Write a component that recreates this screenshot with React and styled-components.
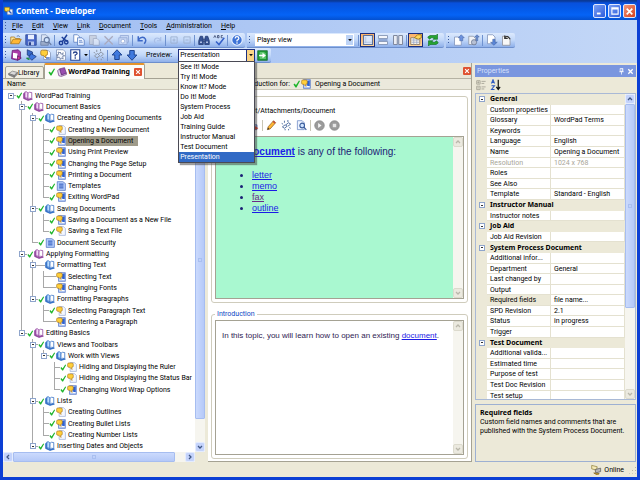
import React from "react";
import styled, { createGlobalStyle, css } from "styled-components";

const GlobalStyle = createGlobalStyle`
  *, *::before, *::after { box-sizing: border-box; }
  body { margin: 0; }
  body, button, select, input, table {
    font-family: Roboto, "Noto Sans", sans-serif;
    font-size: 7px;
    line-height: 10px;
    color: #000;
  }
  button { padding: 0; border: 0; background: none; }
  ul { list-style: none; margin: 0; padding: 0; }
`;

const boldFace = css`
  font-family: "Noto Sans", "Open Sans", sans-serif;
  font-weight: bold;
`;

/* ---------- icons ---------- */

const page = (x = 3, y = 1, w = 10, h = 13, fill = "#fff", stroke = "#7c8fb5") => (
  <path d={`M${x} ${y}h${w - 3}l3 3v${h - 3}h-${w}z`} fill={fill} stroke={stroke} />
);
const magnifier = (c = "#3b5d9c") => (
  <g fill="#cfe4ff" stroke={c} strokeWidth="1.6"><circle cx="9" cy="8" r="3.4" /><path d="M11.5 10.5l3.5 4" /></g>
);
const balloon = <path d="M1 3.500q0-2 2-2h5q2 0 2 2v3q0 2-2 2H7.500l.5 3.500L4.500 8.500H3q-2 0-2-2z" fill="#ffcf3a" stroke="#a9741a" />;
const book = (line, fill) => (
  <g stroke={line} strokeWidth="1.200" strokeLinejoin="round">
    <path d="M1 4l2-1v8l5 3 5-2 2 1-7 2-7-3z" fill={line} />
    <path d="M3 1.500Q6.500 0 8 3.500v10Q6.500 10 3 11z" fill={fill} />
    <path d="M14 2.500Q9.500 1 8 3.500v10q1.500-3 6-1.500z" fill="#fff" />
  </g>
);

const GLYPHS = {
  app: <><path d="M5 5h9v9H5z" fill="#e8edf8" stroke="#51699e" /><path d="M1 2h8v6H5L3 10V8H1z" fill="#ffd83d" stroke="#8a6a10" /><path d="M8 8l4 4" stroke="#2a57c0" strokeWidth="2" /></>,
  open: <><path d="M1 13V4h5l1 2h6v3" fill="#ffe9a0" stroke="#a9741a" /><path d="M1 13l3-6h11l-3 6z" fill="#ffb734" stroke="#a9741a" /><path d="M9 3q3-2 4 1" fill="none" stroke="#4f6ba5" /></>,
  save: <><path d="M1 1h14v14H2l-1-1z" fill="#4867c8" stroke="#27408f" /><path d="M4 1h8v6H4z" fill="#e8efff" /><path d="M4 10h8v5H4z" fill="#b9c8ee" /><path d="M5 11h3v4H5z" fill="#27408f" /></>,
  printFind: <>{page(2, 1, 9, 12, "#dde6f5", "#8194b8")}<path d="M1 10h10v5H1z" fill="#9aabc9" stroke="#65799f" />{magnifier("#65799f")}</>,
  cut: <g fill="none" stroke="#1d3f99" strokeWidth="1.900"><path d="M12 1L6 10M5 4l7 6" /><circle cx="4" cy="12" r="2.300" /><circle cx="11" cy="11" r="2.300" /></g>,
  copy: <>{page(1, 1, 8, 10, "#fff", "#5278bd")}{page(6, 5, 9, 10, "#eaf2ff", "#5278bd")}<path d="M8 9h4M8 11h5" stroke="#5278bd" /></>,
  paste: <g opacity=".7"><path d="M2 2h9v12H2z" fill="#c9cdd8" stroke="#8f96ab" />{page(7, 6, 8, 9, "#e6ebf5", "#8f96ab")}</g>,
  del: <path d="M2 3l11 11M13 3L2 14" stroke="#a9a9bd" strokeWidth="1.700" fill="none" />,
  camera: <g stroke="#8fa6d4" fill="#c5d5f3"><path d="M3 2h11v9H3z" /><path d="M1 5h11v9H1z" /><circle cx="6.500" cy="9.500" r="2.500" fill="#fff" /></g>,
  undo: <path d="M3 3v6h6M3 8q4-5 8-3 4 3 0 8" fill="none" stroke="#3d68c6" strokeWidth="2" />,
  redo: <path d="M13 4v5H8M13 8Q9 4 6 6q-3 3 0 6" fill="none" stroke="#a9bee6" strokeWidth="1.500" />,
  plus: <path d="M3 3h10v10H3zM8 5.500v5M5.500 8h5" fill="none" stroke="#9db0cf" strokeWidth="1.400" />,
  minus: <path d="M3 3h10v10H3zM5.500 8h5" fill="none" stroke="#9db0cf" strokeWidth="1.400" />,
  binoculars: <g fill="#375394" stroke="#22386e"><path d="M3 3h3l1 4v7H1V9zM10 3h3l2 6v5H9V7z" /><path d="M7 7h2v3H7z" fill="#8ea6d8" /><path d="M3 10h2v2H3zM11 10h2v2h-2z" fill="#dbe6ff" stroke="none" /></g>,
  spell: <><path d="M1 5l1.500-3L4 5M6 2v3h2V2zM13 2h-2v3h2" stroke="#2b3b64" fill="none" /><path d="M4 10l4 4 7-9" stroke="#3560c8" strokeWidth="2" fill="none" /></>,
  help: <><circle cx="8" cy="8" r="7" fill="#3c72d6" stroke="#e8f1ff" strokeWidth="1.500" /><path d="M5.500 6q0-2.500 2.500-2.500T10.500 6Q10.500 7 8 8.500V10M8 11v2" stroke="#fff" strokeWidth="1.600" fill="none" /></>,
  frame: <><path d="M2 2h12v12H2z" fill="#dce8fb" stroke="#5f7399" strokeWidth="1.500" /><path d="M5 4v8M3 11h10" stroke="#a9bbdc" /></>,
  rows: <><path d="M2 2h12v4H2zM2 10h12v4H2z" fill="#f5f7fc" stroke="#7587a8" /><path d="M2 7.500h12v1H2z" fill="#3f5d99" /></>,
  cols: <path d="M2 2h5v12H2zM9 2h5v12H9z" fill="#e9ecf3" stroke="#7d869b" strokeWidth="1.300" />,
  props: <><path d="M1 5h12v9H1z" fill="#f7f4e6" stroke="#7a6a55" /><path d="M2 8h10M2 11h10M5 5v9M9 5v9" stroke="#96a6cd" /><path d="M6 5l4-4h5v4l-4 2z" fill="#ffd75a" stroke="#8a6a10" /></>,
  refresh: (
    <g fill="#26a531" stroke="#0c6f1c" strokeWidth=".8">
      <path d="M1 4l3-2h8l2-2v7H8l2-2H6L3 7z" />
      <path d="M15 12l-3 2H4l-2 2V9h6l-2 2h4l3-2z" />
    </g>
  ),
  pageUp: <>{page(2, 4, 9, 11)}<path d="M11 1l4 4h-2v4h-4V5H7z" fill="#6d92de" stroke="#3f5fa0" strokeWidth=".7" /></>,
  pageUpGray: <>{page(1, 3, 9, 11, "#f1f2f5", "#8790a2")}<circle cx="8" cy="11" r="3.500" fill="#b7c0d4" stroke="#68748f" /><path d="M12 1l3 3h-2v5h-2V4H9z" fill="#6b8dce" stroke="#3f5fa0" strokeWidth=".7" /></>,
  pageDown: <>{page(2, 1, 10, 12)}<path d="M9 7h3v4h3l-4.500 4L6 11h3z" fill="#5a86d8" stroke="#3f5fa0" strokeWidth=".7" /></>,
  pageUndo: <>{page(2, 3, 10, 12, "#f8f8f8", "#8c8c94")}<path d="M12 7Q9 1 5 5M5 2v4h4" fill="none" stroke="#333" strokeWidth="1.600" /></>,
  purpleBook: <><path d="M3 2l8-1 3 3v9l-4 2-8-2z" fill="#a93aa8" stroke="#601d6f" /><path d="M4 5l6 1v7l-6-1z" fill="#fff" /><path d="M10 9l5 3-5 3z" fill="#d63c8f" stroke="#601d6f" /></>,
  training: <><path d="M4 3l8-2 3 9-8 3z" fill="#9a4fb0" stroke="#5b2370" /><path d="M1 6l3-3 3 10 8-3v2l-8 3-4-1z" fill="#e9d5f0" stroke="#5b2370" /></>,
  blueDown: <><path d="M3 1l7 3v8l-7-4z" fill="#3968c9" stroke="#1c3777" /><path d="M8 6l7 4-6 5-4-4z" fill="#3f77e0" stroke="#1c3777" /><path d="M2 12l4 2" stroke="#1a8b3a" strokeWidth="2" /></>,
  topicNew: <>{page(5, 2, 9, 12)}{balloon}<path d="M8 12h5" stroke="#4b72c0" strokeWidth="2" /></>,
  newPage: <>{page(2, 1, 12, 14)}<path d="M7 4l1 3 3-2-1 3 3 1-3 1 1 3-3-1-1 2-1-3-3 1 1-3-2-1 3-1-1-3 3 1z" fill="#f4f7ff" stroke="#66779c" /></>,
  question: <><path d="M1 1h12v14H1z" fill="#fff" stroke="#294999" strokeWidth="1.500" /><path d="M4.500 6q0-2 2.500-2t2.500 2q0 1-2.500 2v2M7 11v2" fill="none" stroke="#1f3a86" strokeWidth="1.700" /></>,
  linkGray: <g fill="none" stroke="#8b93a2" strokeWidth="1.300"><path d="M2 9l4-3 3 3-4 3zM7 7l4-3 3 3-4 3M5 1v3M10 0v3M1 4l2 2M14 12l-2-1M6 15v-2M11 15v-2" /></g>,
  up: <path d="M8 1l6.500 7H11v6H5V8H1.500z" fill="#3f79de" stroke="#1e438f" strokeWidth="1.300" />,
  down: <path d="M8 15l6.500-7H11V2H5v6H1.500z" fill="#3f79de" stroke="#1e438f" strokeWidth="1.300" />,
  go: <><path d="M1 1h14v14H1z" fill="#219a37" stroke="#0d6422" /><path d="M4 3h6l3 2v8H4z" fill="#5cc56c" /><path d="M3 7h5V4l5 4-5 4V9H3z" fill="#fff" /></>,
  library: <g stroke="#6b6b6b"><path d="M1 9l6-4 8 2-5 5z" fill="#d9d9d9" /><path d="M1 9l9 3v3L1 11zM10 12l5-5v3l-5 5z" fill="#8f8f8f" /></g>,
  check: <path d="M1 9l2-2 3 3 6-9 2 1-7 13H5z" fill="#1fb52c" />,
  chapter: book("#8d3f9b", "#f3d8f7"),
  section: book("#2d6bc4", "#b9dcff"),
  topic: <>{page(5, 1, 10, 14, "#f3f7ff", "#8ea3cd")}{balloon}</>,
  topicDone: <><path d="M4 1h11v14H4z" fill="#b8cdf7" stroke="#4569bd" /><path d="M8 4l6-2v11l-4-3z" fill="#2f61d0" /><path d="M6 12h8" stroke="#fff" strokeWidth="1.500" />{balloon}</>,
  doc: <><path d="M2 1h9l4 3v11H2z" fill="#b5cdfb" stroke="#3b62b8" /><path d="M5 5h7M5 8h7M5 11h7" stroke="#2450b8" strokeWidth="1.600" /></>,
  print: <><path d="M2 7h11v7H2z" fill="#b9c8ee" stroke="#27408f" /><path d="M9 8l6 4-6 3z" fill="#d9351f" /></>,
  pencil: <><path d="M2 14l1-4L11 1l3 3-8 9z" fill="#ffb734" stroke="#8a5a16" /><path d="M11 1l3 3-1.500 1.500-3-3z" fill="#c14a3a" /><path d="M2 14l1-3 2 2z" fill="#333" /></>,
  linkBlue: <g fill="none" stroke="#47679c" strokeWidth="1.300"><path d="M2 10l4-3 3 2-4 3zM7 7l4-3 3 2-4 3M5 1v3M10 0v3M1 5l2 1M14 12l-2-1M6 15v-2M11 15v-2" /></g>,
  find: <>{page(2, 1, 10, 13, "#eef4ff", "#5d7fbf")}{magnifier()}</>,
  play: <><circle cx="8" cy="8" r="7" fill="#9b9b9b" stroke="#868686" /><path d="M6 4.500l5 3.500-5 3.500z" fill="#f4f4f4" /></>,
  stop: <><circle cx="8" cy="8" r="7" fill="#9b9b9b" stroke="#868686" /><path d="M5.500 5.500h5v5h-5z" fill="#e6e6e6" /></>,
  categories: <g fill="none" stroke="#a7a598" strokeWidth="1.300"><path d="M1 1h5v5H1zM1 9h5v5H1zM2 3.500h3M2 11.500h3M3.500 2v3M8 2h6M8 5h4M8 10h6M8 13h4" /></g>,
  sort: <><path d="M2 6l2-5 2 5M3 4.500h2M2 9h4l-4 5h4" stroke="#2b57c0" strokeWidth="1.400" fill="none" /><path d="M11 1v12M8.500 10.500L11 14l2.500-3.500" stroke="#111" strokeWidth="1.600" fill="none" /></>,
  pin: <path d="M5 1h6v7H5zM9.500 1v7M3 8.500h10M8 9v6" stroke="#fff" strokeWidth="1.700" fill="none" />,
  close: <path d="M3 3l10 10M13 3L3 13" stroke="#fff" strokeWidth="3" fill="none" />,
  minimize: <path d="M3 12h6" stroke="#fff" strokeWidth="3" />,
  maximize: <path d="M3 3h10v10H3zM3 4.500h10" stroke="#fff" strokeWidth="1.800" fill="none" />,
  online: <><path d="M1 2l8 2-1 5-7-2z" fill="#f4e9b8" stroke="#8a7a30" /><path d="M6 8l8-2v5l-7 2z" fill="#b8b8b8" stroke="#555" /><path d="M4 13l8 1-3 2z" fill="#e6b729" stroke="#7a5a10" /></>,
  chevUp: <path d="M4 10l4-4 4 4" stroke="currentColor" strokeWidth="2.500" fill="none" />,
  chevDown: <path d="M4 6l4 4 4-4" stroke="currentColor" strokeWidth="2.500" fill="none" />,
  chevLeft: <path d="M10 4L6 8l4 4" stroke="currentColor" strokeWidth="2.500" fill="none" />,
  chevRight: <path d="M6 4l4 4-4 4" stroke="currentColor" strokeWidth="2.500" fill="none" />,
  caret: <path d="M3 5h10l-5 6z" fill="currentColor" />,
};

const Svg = styled.svg`
  display: block;
  flex: none;
  width: ${(p) => p.$size}px;
  height: ${(p) => p.$size}px;
`;
const Icon = ({ name, size = 11 }) => (
  <Svg $size={size} viewBox="0 0 16 16" aria-hidden="true">{GLYPHS[name]}</Svg>
);

/* ---------- window frame ---------- */

const Window = styled.div`
  height: 100vh;
  display: flex;
  flex-direction: column;
  background: #ece9d8;
  border: solid #0c3fd4;
  border-width: 0 3px 3px;
  overflow: hidden;
`;
const TitleBar = styled.header`
  display: flex;
  align-items: center;
  flex: none;
  height: 20px;
  margin: 0 -3px;
  padding: 2px 4px 0 4px;
  gap: 2px;
  background: linear-gradient(#0a3a98 0 1px, #0850dc 3px, #0458e6 8px, #0563f6 15px, #0450cf 20px);
`;
const Title = styled.h1`
  flex: 1;
  margin: 0;
  ${boldFace}
  font-size: 8px;
  color: #fff;
`;
const CaptionButton = styled.button`
  display: grid;
  place-items: center;
  width: 13px;
  height: 14px;
  border: 1px solid #dfe8ff;
  border-radius: 2px;
  background: ${(p) => (p.$danger ? "linear-gradient(135deg,#f0987c,#d9401c)" : "linear-gradient(135deg,#7ba0f4,#2b5bdc)")};
`;
const Bars = styled.div`
  position: relative;
  z-index: 5;
  flex: none;
  background: linear-gradient(90deg, #9fbdf2, #c3d7f7);
`;
const MenuBar = styled.nav`
  display: flex;
  align-items: center;
  height: 12px;
`;
const MenuItems = styled.div`
  display: flex;
  gap: 9px;
  padding-left: 4px;
`;
const MenuItem = styled.button`
  line-height: 10px;
  &::first-letter { text-decoration: underline; }
`;
const BarRow = styled.div`
  display: flex;
  height: 15px;
  gap: 2px;
  margin-top: ${(p) => p.$gap || 0}px;
`;
const Toolbar = styled.div`
  display: flex;
  align-items: center;
  padding-right: 1px;
  border-radius: 0 2px 2px 0;
  border-bottom: 1px solid #6d8fcc;
  background: linear-gradient(#dce9fd, #c2d8f9 50%, #8fb0ea);
`;
const Grip = styled.span`
  flex: none;
  width: ${(p) => p.$w || 5}px;
  height: 9px;
  background: repeating-linear-gradient(#3b5b9f 0 1px, transparent 1px 3px) 2px 0 / 1px 100% no-repeat;
`;
const Separator = styled.span`
  flex: none;
  width: 1px;
  height: 11px;
  margin: 0 1px;
  background: ${(p) => (p.$soft ? "#c8c5b5" : "#6f92d0")};
`;
const ToolButton = styled.button`
  display: flex;
  align-items: center;
  justify-content: center;
  flex: none;
  width: ${(p) => p.$w || 15}px;
  height: 14px;
  ${(p) => p.$on && css`border: 1px solid #1b2f80; background: linear-gradient(#fbb066, #ffd69a);`}
`;
const Combo = styled.div`
  position: relative;
  display: flex;
  flex: none;
  width: ${(p) => p.$w}px;
  height: ${(p) => p.$h}px;
  margin-right: ${(p) => p.$after || 0}px;
  background: #fff;
  border: 1px solid ${(p) => (p.$open ? "#1b2f80" : "#fff")};
`;
const ComboSelect = styled.select`
  flex: 1;
  min-width: 0;
  appearance: none;
  border: 0;
  padding: 0 1px;
  background: #fff;
  border-radius: 0;
`;
const ComboArrow = styled.span`
  display: grid;
  place-items: center;
  width: 8px;
  pointer-events: none;
  color: #111;
  background: ${(p) => (p.$open ? "#fbd486" : "#bdd3f6")};
  border-left: 1px solid ${(p) => (p.$open ? "#1b2f80" : "#fff")};
`;
const Menu = styled.ul`
  position: absolute;
  top: 100%;
  left: -1px;
  width: 77px;
  background: #fff;
  border: 1px solid #4a4a55;
  box-shadow: 2px 2px 1px rgba(60, 60, 60, 0.5);
`;
const MenuOption = styled.li`
  padding-left: 1px;
  line-height: 10px;
  ${(p) => p.$active && css`background: #316ac5; color: #fff;`}
`;
const BarLabel = styled.label`padding: 0 6px 0 7px;`;

/* ---------- scrollbars ---------- */

const Track = styled.div`
  display: flex;
  flex: none;
  flex-direction: ${(p) => (p.$row ? "row" : "column")};
  ${(p) => (p.$row ? "height: 10px;" : "width: 10px;")}
  background: #f6f5ef;
`;
const ScrollButton = styled.button`
  display: grid;
  place-items: center;
  width: 10px;
  height: 10px;
  color: ${(p) => (p.$off ? "#b9b7aa" : "#3f5684")};
  background: ${(p) => (p.$off ? "#ebe9df" : "#c4d3fb")};
  border: 1px solid ${(p) => (p.$off ? "#dcdacd" : "#e4ecff")};
  border-radius: 2px;
`;
const Thumb = styled.div`
  flex: ${(p) => p.$grow} 1 0;
  display: grid;
  place-items: center;
  background: linear-gradient(${(p) => (p.$row ? "180deg" : "90deg")}, #cbdafd, #b5c9f8);
  border: 1px solid #a6bdf0;
  border-radius: 1px;
  &::after { content: ""; width: 4px; height: 4px; border: 1px solid #a9bff0; }
`;
const Rest = styled.div`flex: ${(p) => p.$grow} 1 0;`;
const Corner = styled.div`
  flex: none;
  width: 10px;
  background: #ece9d8;
`;
const ScrollRow = styled.div`
  display: flex;
  flex: none;
  & > :first-child { flex: 1; }
`;

const Scrollbar = ({ row, thumb, rest = 0, off, endOff }) => (
  <Track $row={row}>
    <ScrollButton $off={off} aria-label="Scroll back"><Icon name={row ? "chevLeft" : "chevUp"} size={8} /></ScrollButton>
    {thumb ? <Thumb $row={row} $grow={thumb} /> : null}
    <Rest $grow={thumb ? rest : 1} />
    <ScrollButton $off={off || endOff} aria-label="Scroll forward"><Icon name={row ? "chevRight" : "chevDown"} size={8} /></ScrollButton>
  </Track>
);

/* ---------- workspace ---------- */

const Workspace = styled.main`
  flex: 1;
  min-height: 0;
  display: grid;
  grid-template-columns: 202px minmax(0, 1fr) 162px;
  grid-template-rows: minmax(0, 1fr);
  gap: 3px;
`;
const Pane = styled.section`
  display: flex;
  flex-direction: column;
  min-width: 0;
  min-height: 0;
`;
const Tabs = styled.div`
  display: flex;
  align-items: flex-end;
  flex: none;
  height: 16px;
  padding-left: 2px;
  border-bottom: 1px solid #a5a293;
`;
const Tab = styled.button`
  display: flex;
  align-items: center;
  height: ${(p) => (p.$active ? 16 : 13)}px;
  padding: 0 4px 0 2px;
  margin-bottom: -1px;
  background: ${(p) => (p.$active ? "#fcfcf9" : "#f1efe4")};
  border: 1px solid #a5a293;
  border-bottom: ${(p) => (p.$active ? 0 : "1px solid #a5a293")};
  border-radius: 2px 2px 0 0;
  ${(p) => p.$active && css`${boldFace} border-top: 2px solid #e5942c; padding: 0 2px 0 3px; gap: 1px;`}
`;
const TabClose = styled.span`
  display: grid;
  place-items: center;
  width: 8px;
  height: 8px;
  margin-left: 3px;
  border-radius: 1px;
  background: #df5230;
`;
const TreeHeader = styled.div`
  flex: none;
  height: 11px;
  padding-left: 4px;
  background: #ebeadb;
  border-bottom: 1px solid #cbc7b8;
`;
const TreeBody = styled.div`
  flex: 1;
  min-height: 0;
  display: flex;
  background: #fff;
`;
const Tree = styled.ul`
  flex: 1;
  min-width: 0;
  display: flex;
  flex-direction: column;
  padding-left: 2px;
`;
const TreeRow = styled.li`
  flex: 1 1 0;
  min-height: 0;
  display: flex;
  align-items: center;
  white-space: nowrap;
`;
const line = "linear-gradient(#a8a8a8, #a8a8a8)";
const guideStyles = {
  blank: "",
  pass: `background: ${line} 5px 0 / 1px 100% no-repeat;`,
  tee: `background: ${line} 5px 0 / 1px 100% no-repeat, ${line} 5px 50% / 6px 1px no-repeat;`,
  end: `background: ${line} 5px 0 / 1px 50% no-repeat, ${line} 5px 50% / 6px 1px no-repeat;`,
  root: `background: ${line} 5px 50% / 6px 1px no-repeat;`,
};
const Guide = styled.span`
  flex: none;
  align-self: stretch;
  display: grid;
  place-items: center;
  width: 11px;
  ${(p) => guideStyles[p.$kind]}
`;
const Expander = styled.button`
  display: block;
  width: 6px;
  height: 6px;
  border: 1px solid #8fa5cc;
  background: linear-gradient(#333, #333) center / 2px 1px no-repeat #fff;
`;
const Dash = styled.span`
  width: 7px;
  height: 1px;
  background: #a8a8a8;
`;
const NodeLabel = styled.span`
  padding: 0 5px 0 2px;
  ${(p) => p.$selected && css`background: #9f9b8a;`}
`;

const t = (label, icon, extra) => ({ label, icon, ...extra });
const TREE = t("WordPad Training", "chapter", {
  kids: [
    t("Document Basics", "chapter", {
      kids: [
        t("Creating and Opening Documents", "section", {
          kids: [
            t("Creating a New Document", "topic"),
            t("Opening a Document", "topicDone", { selected: true }),
            t("Using Print Preview", "topicDone"),
            t("Changing the Page Setup", "topicDone"),
            t("Printing a Document", "topicDone"),
            t("Templates", "doc"),
            t("Exiting WordPad", "topicDone"),
          ],
        }),
        t("Saving Documents", "section", {
          kids: [t("Saving a Document as a New File", "topicDone"), t("Saving a Text File", "topic")],
        }),
        t("Document Security", "doc"),
      ],
    }),
    t("Applying Formatting", "chapter", {
      kids: [
        t("Formatting Text", "section", {
          open: true,
          kids: [t("Selecting Text", "topicDone", { open: true }), t("Changing Fonts", "topicDone", { open: true })],
        }),
        t("Formatting Paragraphs", "section", {
          kids: [t("Selecting Paragraph Text", "topic"), t("Centering a Paragraph", "topicDone", { open: true })],
        }),
      ],
    }),
    t("Editing Basics", "chapter", {
      kids: [
        t("Views and Toolbars", "section", {
          kids: [
            t("Work with Views", "section", {
              kids: [
                t("Hiding and Displaying the Ruler", "topic"),
                t("Hiding and Displaying the Status Bar", "topic"),
                t("Changing Word Wrap Options", "topicDone"),
              ],
            }),
          ],
        }),
        t("Lists", "section", {
          kids: [t("Creating Outlines", "topic"), t("Creating Bullet Lists", "topicDone"), t("Creating Number Lists", "topic")],
        }),
        t("Inserting Dates and Objects", "section", { kids: [] }),
      ],
    }),
  ],
});

const flatten = (node, guides, kind) => [
  { ...node, guides: [...guides, kind] },
  ...(node.kids || []).flatMap((kid, i, all) =>
    flatten(kid, [...guides, kind === "tee" ? "pass" : "blank"], i === all.length - 1 ? "end" : "tee")
  ),
];
const ROWS = flatten(TREE, [], "root");

const TreePane = () => (
  <Pane>
    <Tabs>
      <Tab><Icon name="library" size={10} />Library</Tab>
      <Tab $active>
        <Icon name="check" size={8} /><Icon name="training" size={10} />WordPad Training
        <TabClose><Icon name="close" size={6} /></TabClose>
      </Tab>
    </Tabs>
    <TreeHeader>Name</TreeHeader>
    <TreeBody>
      <Tree>
        {ROWS.map((row) => (
          <TreeRow key={row.label}>
            {row.guides.map((kind, i) => (
              <Guide key={i} $kind={kind}>
                {i === row.guides.length - 1 && row.kids && <Expander aria-label={`Collapse ${row.label}`} />}
              </Guide>
            ))}
            {row.open ? <Dash /> : <Icon name="check" size={7} />}
            <Icon name={row.icon} size={10} />
            <NodeLabel $selected={row.selected}>{row.label}</NodeLabel>
          </TreeRow>
        ))}
      </Tree>
      <Scrollbar thumb={318} rest={23} />
    </TreeBody>
    <ScrollRow>
      <Scrollbar row thumb={160} rest={10} />
      <Corner />
    </ScrollRow>
  </Pane>
);

/* ---------- editor ---------- */

const EditorPane = styled(Pane)`
  background: #fff;
  border-right: 1px solid #a5a293;
  border-bottom: 1px solid #a5a293;
`;
const EditorTop = styled.div`
  display: flex;
  justify-content: flex-end;
  align-items: center;
  flex: none;
  height: 15px;
  background: #e9e6d6;
`;
const CloseButton = styled.button`
  display: grid;
  place-items: center;
  width: 8px;
  height: 8px;
  border-radius: 1px;
  background: #df5230;
`;
const EditorCaption = styled.div`
  display: flex;
  align-items: center;
  flex: none;
  height: 12px;
  padding-left: 32px;
  background: #ebe9dc;
  border-top: 1px solid #b5b2a3;
  border-bottom: 1px solid #cbc8b8;
`;
const CaptionTopic = styled.span`
  display: flex;
  align-items: center;
  padding-left: 3px;
  & > span { padding-left: 4px; }
`;
const Groups = styled.div`
  flex: 1;
  min-height: 0;
  display: flex;
  flex-direction: column;
  gap: 7px;
  padding: 6px 3px 2px;
`;
const Group = styled.fieldset`
  flex: ${(p) => p.$grow} 1 0;
  min-width: 0;
  min-height: 0;
  margin: 0;
  padding: ${(p) => (p.$titled ? 2 : 9)}px 3px 3px;
  border: 1px solid #cfccbc;
  border-radius: 3px;
`;
const GroupBody = styled.div`
  height: 100%;
  display: flex;
  flex-direction: column;
`;
const Legend = styled.legend`
  margin: 0;
  padding: 0 2px;
  line-height: 8px;
  color: #0b46c4;
`;
const Path = styled.div`padding-left: 15px;`;
const EditTools = styled.div`
  display: flex;
  align-items: center;
  flex: none;
  height: 19px;
  margin-bottom: 1px;
  padding-left: 31px;
`;
const Viewer = styled.div`
  flex: 1;
  min-height: 0;
  display: flex;
  background: ${(p) => p.$bg};
  border: 1px solid #a5a293;
`;
const Prose = styled.div`
  flex: 1;
  font-family: "Liberation Sans", Arial, sans-serif;
  font-size: ${(p) => p.$size}px;
  line-height: 11px;
  padding: 9px 6px;
  color: ${(p) => p.$ink};
`;
const Paragraph = styled.p`
  margin: 0 0 13px;
  text-indent: ${(p) => p.$indent || 0}px;
  white-space: nowrap;
`;
const Bullets = styled.ul`
  list-style: disc;
  padding-left: 30px;
  font-size: 9px;
`;
const Link = styled.a`
  color: ${(p) => (p.$visited ? "#6a2a86" : "#1b1be6")};
  text-decoration: underline;
`;

const Editor = () => (
  <EditorPane>
    <EditorTop><CloseButton aria-label="Close"><Icon name="close" size={6} /></CloseButton></EditorTop>
    <EditorCaption>
      Introduction for:
      <CaptionTopic><Icon name="check" size={8} /><Icon name="topicDone" size={10} /><span>Opening a Document</span></CaptionTopic>
    </EditorCaption>
    <Groups>
      <Group $grow={205}>
        <GroupBody>
          <Path>/Content/Attachments/Document</Path>
          <EditTools>
            <ToolButton aria-label="Print"><Icon name="print" /></ToolButton>
            <Separator $soft />
            <ToolButton aria-label="Edit"><Icon name="pencil" /></ToolButton>
            <ToolButton aria-label="Link"><Icon name="linkBlue" /></ToolButton>
            <ToolButton aria-label="Preview"><Icon name="find" /></ToolButton>
            <Separator $soft />
            <ToolButton aria-label="Play"><Icon name="play" /></ToolButton>
            <ToolButton aria-label="Stop"><Icon name="stop" /></ToolButton>
          </EditTools>
          <Viewer $bg="#a9f8d0">
            <Prose $size={10} $ink="#1b2176">
              <Paragraph $indent={24}><b><Link href="#document">Document</Link></b> is any of the following:</Paragraph>
              <Bullets>
                <li><Link href="#letter">letter</Link></li>
                <li><Link href="#memo">memo</Link></li>
                <li><Link href="#fax" $visited>fax</Link></li>
                <li><Link href="#outline">outline</Link></li>
              </Bullets>
            </Prose>
            <Scrollbar off />
          </Viewer>
        </GroupBody>
      </Group>
      <Group $grow={150} $titled>
        <Legend>Introduction</Legend>
        <GroupBody>
          <Viewer $bg="#fff">
            <Prose $size={8} $ink="#2f1c52">
              <Paragraph>In this topic, you will learn how to open an existing <Link href="#doc">document</Link>.</Paragraph>
            </Prose>
            <Scrollbar off />
          </Viewer>
        </GroupBody>
      </Group>
    </Groups>
  </EditorPane>
);

/* ---------- properties ---------- */

const PropsPane = styled(Pane)`
  padding-top: 2px;
  padding-right: 1px;
`;
const PropsTitle = styled.div`
  display: flex;
  align-items: center;
  flex: none;
  height: 12px;
  padding: 0 2px;
  gap: 2px;
  color: #d7e1fb;
  background: #7a96df;
  & > span { flex: 1; }
`;
const PropsTools = styled.div`
  display: flex;
  align-items: center;
  flex: none;
  height: 16px;
`;
const PropsBox = styled.div`
  flex: 1;
  min-height: 0;
  display: flex;
  overflow: hidden;
  border: 1px solid #a9b9d6;
`;
const PropsTable = styled.table`
  flex: 1;
  min-width: 0;
  display: flex;
  margin-bottom: -2px;
  & > tbody { flex: 1; min-width: 0; display: flex; flex-direction: column; }
`;
const PropRow = styled.tr`
  flex: 1 1 0;
  min-height: 0;
  display: grid;
  grid-template-columns: 11px 64px minmax(0, 1fr);
  grid-template-rows: minmax(0, 1fr);
  align-items: center;
  color: ${(p) => (p.$dim ? "#a8a598" : "#000")};
`;
const Gutter = styled.td`
  padding: 0;
  display: grid;
  place-items: center;
`;
const PropHead = styled.th`
  ${boldFace}
  grid-column: 2 / 4;
  padding: 0 0 0 3px;
  text-align: left;
`;
const PropCell = styled.td`
  height: 100%;
  padding: 0 0 0 3px;
  white-space: nowrap;
  overflow: hidden;
  background: ${(p) => (p.$current ? "#ece9d8" : "#fff")};
  border-bottom: 1px solid #e4e1d0;
  border-right: 1px solid #e4e1d0;
`;
const Help = styled.div`
  flex: none;
  height: 58px;
  margin-top: 4px;
  padding: 3px 4px;
  line-height: 9px;
  border: 1px solid #9db0d2;
  & > h2 { ${boldFace} margin: 0 0 1px; font-size: 7px; line-height: 9px; }
  & > p { margin: 0; }
`;

const PROPERTIES = [
  ["General", [["Custom properties"], ["Glossary", "WordPad Terms"], ["Keywords"], ["Language", "English"], ["Name", "Opening a Document"], ["Resolution", "1024 x 768"], ["Roles"], ["See Also"], ["Template", "Standard - English"]]],
  ["Instructor Manual", [["Instructor notes"]]],
  ["Job Aid", [["Job Aid Revision"]]],
  ["System Process Document", [["Additional infor..."], ["Department", "General"], ["Last changed by"], ["Output"], ["Required fields", "file name..."], ["SPD Revision", "2.1"], ["Status", "in progress"], ["Trigger"]]],
  ["Test Document", [["Additional valida..."], ["Estimated time"], ["Purpose of test"], ["Test Doc Revision"], ["Test setup"]]],
];

const Properties = () => (
  <PropsPane>
    <PropsTitle><span>Properties</span><Icon name="pin" size={7} /><Icon name="close" size={7} /></PropsTitle>
    <PropsTools>
      <ToolButton $w={13} aria-label="Categorized"><Icon name="categories" /></ToolButton>
      <ToolButton aria-label="Alphabetical"><Icon name="sort" size={12} /></ToolButton>
    </PropsTools>
    <PropsBox>
      <PropsTable>
        <tbody>
          {PROPERTIES.map(([group, items]) => (
            <React.Fragment key={group}>
              <PropRow>
                <Gutter><Expander aria-label={`Collapse ${group}`} /></Gutter>
                <PropHead>{group}</PropHead>
              </PropRow>
              {items.map(([name, value]) => (
                <PropRow key={name} $dim={name === "Resolution"}>
                  <Gutter />
                  <PropCell $current={name === "Required fields"}>{name}</PropCell>
                  <PropCell>{value}</PropCell>
                </PropRow>
              ))}
            </React.Fragment>
          ))}
        </tbody>
      </PropsTable>
      <Scrollbar thumb={201} rest={80} endOff />
    </PropsBox>
    <Help>
      <h2>Required fields</h2>
      <p>Custom field names and comments that are published with the System Process Document.</p>
    </Help>
  </PropsPane>
);

const StatusBar = styled.footer`
  display: flex;
  justify-content: flex-end;
  align-items: center;
  flex: none;
  height: 15px;
  gap: 2px;
  padding-right: 1px;
`;
const ResizeGrip = styled.span`
  width: 8px;
  height: 8px;
  margin-left: 2px;
  background: radial-gradient(circle, #b5b2a2 1px, transparent 1px) 0 0 / 3px 3px;
  clip-path: polygon(100% 0, 100% 100%, 0 100%);
`;

const PREVIEWS = ["See It! Mode", "Try It! Mode", "Know It? Mode", "Do It! Mode", "System Process", "Job Aid", "Training Guide", "Instructor Manual", "Test Document", "Presentation"];

const Tools = ({ names, w }) => names.map((n) =>
  <ToolButton key={n} $w={w} aria-label={n}><Icon name={n} size={w ? 10 : 12} /></ToolButton>
);

export default function App() {
  return (
    <>
      <GlobalStyle />
      <Window>
        <TitleBar>
          <Icon name="app" size={10} />
          <Title>Content - Developer</Title>
          <CaptionButton aria-label="Minimize"><Icon name="minimize" size={10} /></CaptionButton>
          <CaptionButton aria-label="Maximize"><Icon name="maximize" size={10} /></CaptionButton>
          <CaptionButton $danger aria-label="Close"><Icon name="close" size={9} /></CaptionButton>
        </TitleBar>
        <Bars>
          <MenuBar>
            <Grip />
            <MenuItems>
              {["File", "Edit", "View", "Link", "Document", "Tools", "Administration", "Help"].map((m) => (
                <MenuItem key={m}>{m}</MenuItem>
              ))}
            </MenuItems>
          </MenuBar>
          <BarRow $gap={1}>
            <Toolbar>
              <Grip />
              <Tools names={["open", "save", "printFind"]} /><Separator />
              <Tools names={["cut", "copy", "paste", "del", "camera"]} /><Separator />
              <Tools names={["undo", "redo"]} /><Separator />
              <Tools names={["plus", "minus"]} w={13} /><Separator />
              <Tools names={["binoculars", "spell"]} /><Separator />
              <Tools names={["help"]} />
            </Toolbar>
            <Toolbar>
              <Grip $w={8} />
              <Combo $w={99} $h={12} $after={3}>
                <ComboSelect aria-label="View" defaultValue="Player view"><option>Player view</option></ComboSelect>
                <ComboArrow><Icon name="caret" size={6} /></ComboArrow>
              </Combo>
              <Separator />
              <ToolButton $on aria-label="Single pane"><Icon name="frame" size={12} /></ToolButton>
              <Tools names={["rows", "cols"]} /><Separator />
              <ToolButton $on aria-label="Properties"><Icon name="props" size={12} /></ToolButton>
              <ToolButton $w={20} aria-label="Refresh"><Icon name="refresh" size={12} /></ToolButton>
            </Toolbar>
            <Toolbar>
              <Grip />
              <Tools names={["pageUp", "pageUpGray"]} /><Separator />
              <Tools names={["pageDown", "pageUndo"]} />
            </Toolbar>
          </BarRow>
          <BarRow>
            <Toolbar>
              <Grip />
              <Tools names={["purpleBook", "blueDown", "topicNew", "newPage", "question"]} />
              <ToolButton $w={5} aria-label="More"><Icon name="caret" size={6} /></ToolButton>
              <Separator />
              <Tools names={["linkGray"]} /><Separator />
              <Tools names={["up", "down"]} />
              <BarLabel htmlFor="preview">Preview:</BarLabel>
              <Combo $w={77} $h={13} $open>
                <ComboSelect id="preview" defaultValue="Presentation">
                  {PREVIEWS.map((p) => <option key={p}>{p}</option>)}
                </ComboSelect>
                <ComboArrow $open><Icon name="caret" size={6} /></ComboArrow>
                <Menu role="listbox">
                  {PREVIEWS.map((p) => (
                    <MenuOption key={p} role="option" aria-selected={p === "Presentation"} $active={p === "Presentation"}>{p}</MenuOption>
                  ))}
                </Menu>
              </Combo>
              <ToolButton aria-label="Go"><Icon name="go" size={11} /></ToolButton>
            </Toolbar>
          </BarRow>
        </Bars>
        <Workspace>
          <TreePane />
          <Editor />
          <Properties />
        </Workspace>
        <StatusBar>
          <Icon name="online" size={11} />Online<ResizeGrip />
        </StatusBar>
      </Window>
    </>
  );
}
